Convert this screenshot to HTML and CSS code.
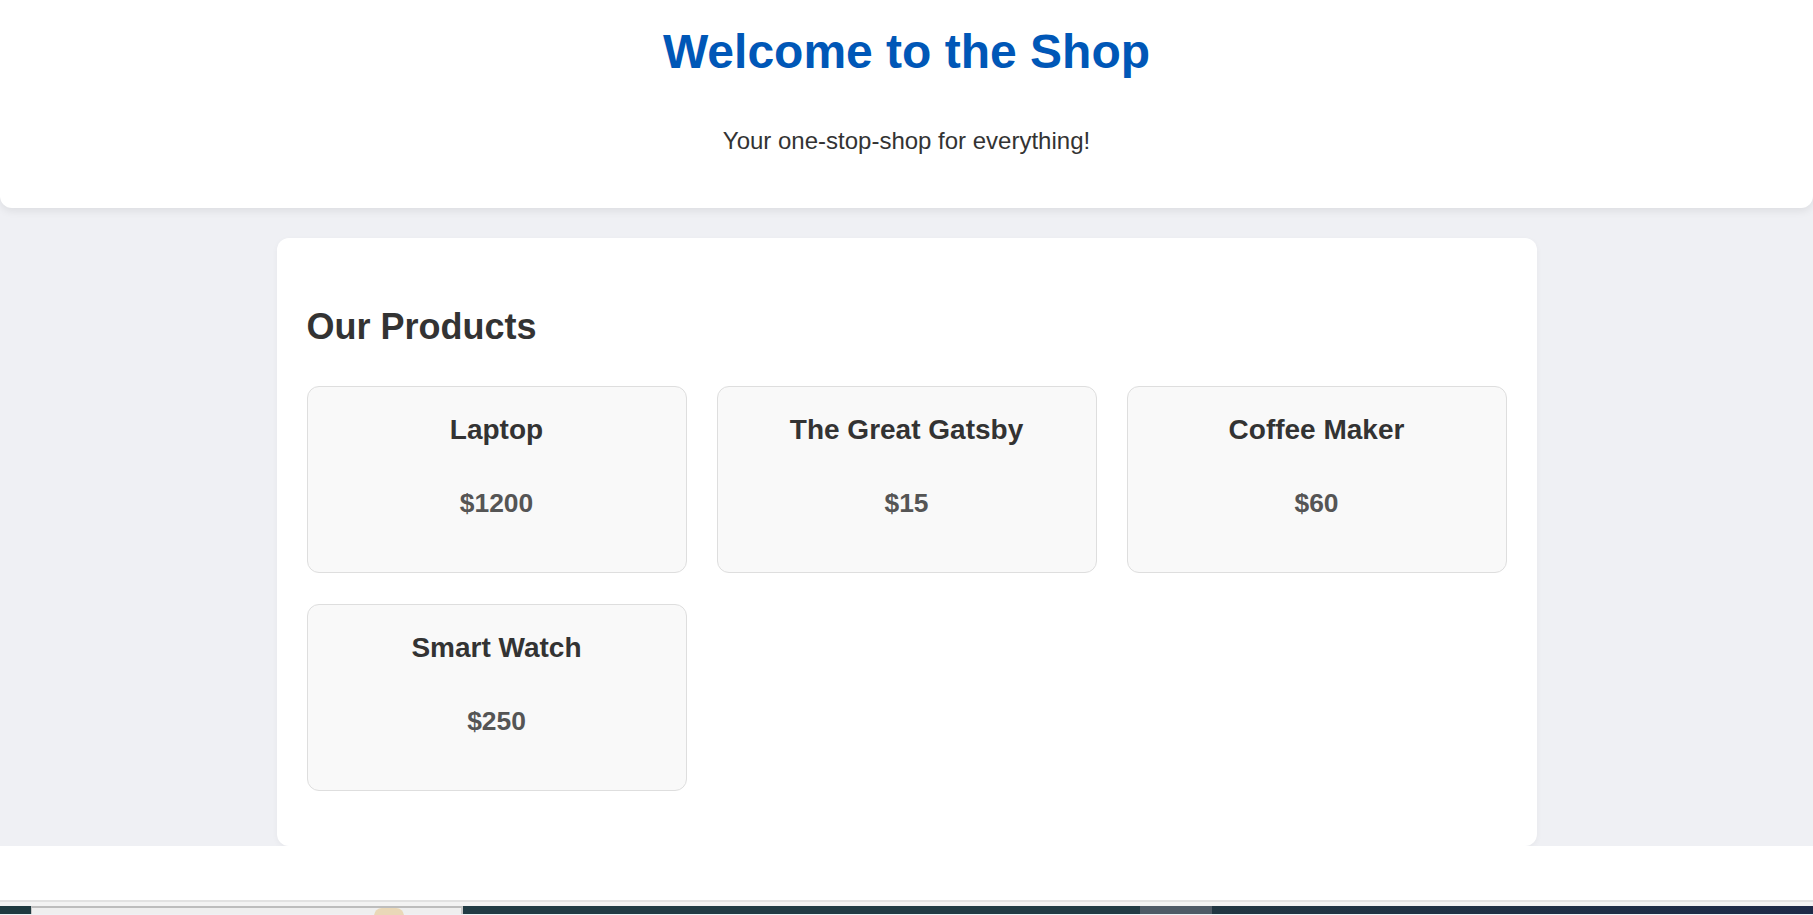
FILE: index.html
```html
<!DOCTYPE html>
<html lang="en">
<head>
<meta charset="utf-8">
<title>Shop</title>
<link rel="stylesheet" href="styles.css">
</head>
<body>
  <header class="site-header">
    <h1 class="site-title">Welcome to the Shop</h1>
    <p class="site-tagline">Your one-stop-shop for everything!</p>
  </header>

  <main class="products">
    <h2 class="products-title">Our Products</h2>
    <div class="product-grid">
      <div class="product-card">
        <h3 class="product-name">Laptop</h3>
        <p class="product-price">$1200</p>
      </div>
      <div class="product-card">
        <h3 class="product-name">The Great Gatsby</h3>
        <p class="product-price">$15</p>
      </div>
      <div class="product-card">
        <h3 class="product-name">Coffee Maker</h3>
        <p class="product-price">$60</p>
      </div>
      <div class="product-card">
        <h3 class="product-name">Smart Watch</h3>
        <p class="product-price">$250</p>
      </div>
    </div>
  </main>

  <footer class="site-footer"></footer>
  <div class="frame-edge"></div>
  <div class="taskbar">
    <div class="tb-start"></div>
    <div class="tb-window"><span class="tb-thumb"></span></div>
    <div class="tb-mid"></div>
    <div class="tb-active"></div>
    <div class="tb-rest"></div>
  </div>
</body>
</html>
```

FILE: styles.css
```css
* { box-sizing: border-box; }

html, body {
  margin: 0;
  padding: 0;
  height: 915px;
  overflow: hidden;
}

body {
  background: #eff0f4;
  font-family: "Liberation Sans", Arial, Helvetica, sans-serif;
  color: #333;
  display: flex;
  flex-direction: column;
}

.site-header {
  background: #fff;
  height: 208px;
  padding: 23px 0 0;
  text-align: center;
  border-radius: 0 0 12px 12px;
  box-shadow: 0 3px 8px rgba(0, 0, 0, 0.08);
  position: relative;
  z-index: 1;
}

.site-title {
  margin: 0;
  font-size: 48px;
  line-height: 58px;
  font-weight: bold;
  color: #0057b7;
}

.site-tagline {
  margin: 46px 0 0;
  font-size: 24px;
  line-height: 28px;
  color: #333;
}

.products {
  width: 1260px;
  margin: 30px auto 0;
  background: #fff;
  border-radius: 12px;
  padding: 30px 30px 55px;
  box-shadow: 0 2px 6px rgba(0, 0, 0, 0.04);
}

.products-title {
  margin: 38px 0 38px;
  font-size: 36px;
  line-height: 42px;
  font-weight: bold;
  color: #333;
}

.product-grid {
  display: grid;
  grid-template-columns: repeat(3, 1fr);
  column-gap: 30px;
  row-gap: 31px;
}

.product-card {
  height: 187px;
  background: #f9f9f9;
  border: 1px solid #dedede;
  border-radius: 12px;
  padding: 27px 20px 0;
  text-align: center;
}

.product-name {
  margin: 0;
  font-size: 28px;
  line-height: 32px;
  font-weight: bold;
  color: #333;
}

.product-price {
  margin: 42px 0 0;
  font-size: 26.4px;
  line-height: 30px;
  font-weight: bold;
  color: #555;
}

.site-footer {
  background: #fff;
  height: 54px;
  flex: none;
}

.frame-edge {
  height: 6px;
  border-top: 2px solid #e2e2e2;
  background: #f3f3f3;
  flex: none;
}

.taskbar {
  height: 8px;
  flex: none;
  display: flex;
  background: #1f3a42;
}

.tb-start {
  width: 31px;
  background: #1f3a40;
}

.tb-window {
  width: 432px;
  background: #efefef;
  border-top: 2px solid #bdbdbd;
  border-left: 1px solid #c8c8c8;
  border-right: 2px solid #c8c8c8;
  position: relative;
}

.tb-thumb {
  position: absolute;
  left: 342px;
  top: 0;
  width: 30px;
  height: 8px;
  border-radius: 15px 15px 0 0;
  background: #ead8b8;
}

.tb-mid {
  width: 677px;
  background: #213b44;
}

.tb-active {
  width: 72px;
  background: #4e5a66;
}

.tb-rest {
  flex: 1;
  background: linear-gradient(90deg, #213642, #1e2a48);
}
```
